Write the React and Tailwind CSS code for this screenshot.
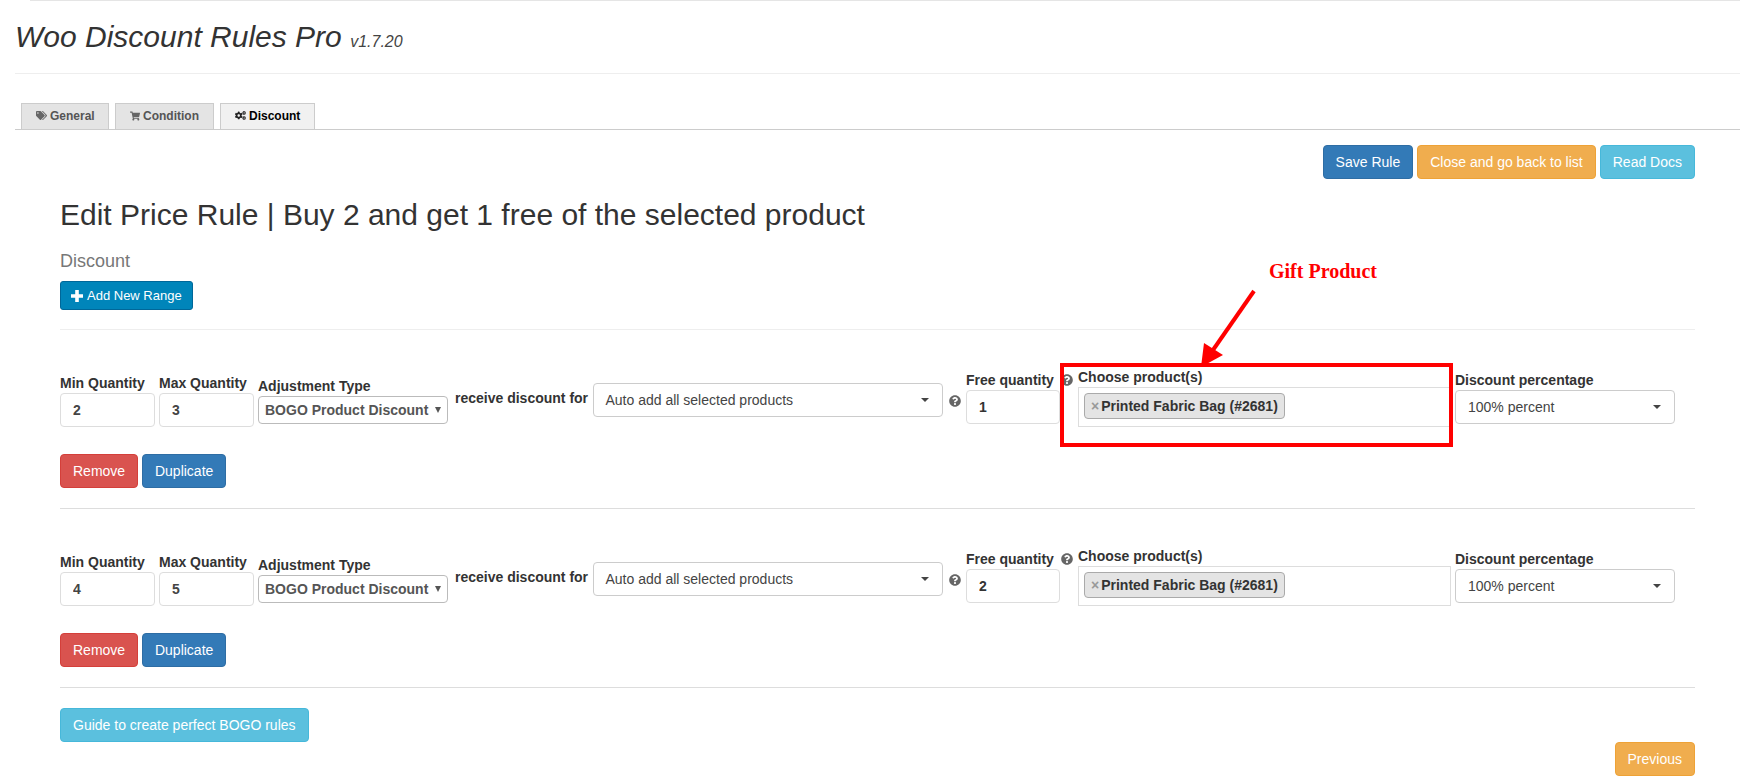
import React from 'react';
import { FaTags, FaShoppingCart, FaCogs, FaQuestionCircle } from 'react-icons/fa';

const btnBase = 'h-[34px] px-3 border rounded text-sm leading-5 text-white whitespace-nowrap';
const btnPrimary = 'bg-[#337ab7] border-[#2e6da4]';
const btnWarning = 'bg-[#f0ad4e] border-[#eea236]';
const btnInfo = 'bg-[#5bc0de] border-[#46b8da]';
const btnDanger = 'bg-[#d9534f] border-[#d43f3a]';

const labelClass = 'block h-5 text-sm leading-5 font-bold text-[#333] whitespace-nowrap';

// Small dark caret used by the select2 style dropdowns
const Caret = () => <span className="w-0 h-0 border-x-4 border-x-transparent border-t-4 border-t-[#444]" />;

const Tab = ({ icon, label, active, iconSize, width }) => (
  <div
    className={`${width} h-[26px] flex items-center gap-[3px] pl-[14px] pb-[2px] border-x border-t border-[#ccc] text-xs font-bold whitespace-nowrap ${
      active ? 'bg-[#f1f1f1] text-black' : 'bg-[#e4e4e4] text-[#555]'
    }`}
  >
    {React.createElement(icon, { size: iconSize, className: active ? 'text-[#222]' : 'text-[#666]' })}
    <span>{label}</span>
  </div>
);

const NumberField = ({ label, value, width }) => (
  <div className={`${width} shrink-0 mt-[43px]`}>
    <span className={labelClass}>{label}</span>
    <input
      readOnly
      value={value}
      className="w-full h-[34px] px-3 border border-[#ddd] rounded text-sm font-bold text-[#444] bg-white"
    />
  </div>
);

const SelectBox = ({ text, className, padding = 'pl-3' }) => (
  <div className={`h-[34px] flex items-center justify-between ${padding} pr-[13px] border border-[#ccc] rounded text-sm text-[#444] bg-white ${className}`}>
    <span>{text}</span>
    <Caret />
  </div>
);

const RuleRow = ({ min, max, free }) => (
  <div>
    <div className="h-[124px] flex items-start">
      <NumberField label="Min Quantity" value={min} width="w-[95px]" />
      <div className="ml-1">
        <NumberField label="Max Quantity" value={max} width="w-[95px]" />
      </div>
      <div className="ml-1 w-[190px] shrink-0 mt-[46px]">
        <span className={labelClass}>Adjustment Type</span>
        <div className="h-[28px] flex items-center justify-between pl-[6px] pr-[6px] border border-[#bbb] rounded text-sm font-bold text-[#555] bg-white">
          <span className="whitespace-nowrap">BOGO Product Discount</span>
          <span className="w-0 h-0 border-x-[3px] border-x-transparent border-t-[6px] border-t-[#555]" />
        </div>
      </div>
      <span className="ml-[7px] mt-[58px] w-[133px] shrink-0 text-sm leading-5 font-bold text-[#333] whitespace-nowrap">
        receive discount for
      </span>
      <SelectBox text="Auto add all selected products" padding="pl-[11.5px]" className="ml-[5px] mt-[53px] w-[350px] shrink-0" />
      <FaQuestionCircle size={12} className="ml-[6px] mt-[65px] shrink-0 text-[#666]" />
      <div className="ml-[5px] w-[94px] shrink-0 mt-[40px]">
        <div className="h-5 flex items-center gap-[7px]">
          <span className="text-sm leading-5 font-bold text-[#333] whitespace-nowrap">Free quantity</span>
          <FaQuestionCircle size={12} className="shrink-0 text-[#666]" />
        </div>
        <input
          readOnly
          value={free}
          className="w-full h-[34px] px-3 border border-[#ddd] rounded text-sm font-bold text-[#333] bg-white"
        />
      </div>
      <div className="ml-[18px] w-[373px] shrink-0 mt-[37px]">
        <span className={labelClass}>Choose product(s)</span>
        <div className="h-10 pl-[5px] pt-[5px] border border-[#ddd] bg-white">
          <div className="flex w-fit h-[26px] items-center pl-[6px] pr-[6px] gap-[2px] border border-[#aaa] rounded bg-[#e4e4e4] text-sm font-bold text-[#333]">
            <span className="text-[#999]">×</span>
            <span>Printed Fabric Bag (#2681)</span>
          </div>
        </div>
      </div>
      <div className="ml-1 w-[220px] shrink-0 mt-[40px]">
        <span className={labelClass}>Discount percentage</span>
        <SelectBox text="100% percent" />
      </div>
    </div>
    <div className="flex gap-1">
      <button className={`${btnBase} ${btnDanger}`}>Remove</button>
      <button className={`h-[34px] w-[84px] border rounded text-sm leading-5 text-white whitespace-nowrap ${btnPrimary}`}>Duplicate</button>
    </div>
    <div className="mt-5 h-px bg-[#ddd]" />
  </div>
);

export default function App() {
  return (
    <div className="relative h-[777px] overflow-hidden bg-white font-['Liberation_Sans',Arial,sans-serif] text-[#333]">
      <div className="ml-[30px] h-px bg-[#e5e5e5]" />

      <div className="ml-[15px] h-[73px] border-b border-[#eee] pt-[19px]">
        <h1 className="text-[30px] leading-[33px] italic font-normal text-[#333] whitespace-nowrap">
          Woo Discount Rules Pro <small className="text-[16px] text-[#444]">v1.7.20</small>
        </h1>
      </div>

      <div className="ml-[15px] mt-[29px] pl-[6px] flex gap-[6px] border-b border-[#ccc]">
        <Tab icon={FaTags} label="General" iconSize={11} width="w-[88px]" />
        <Tab icon={FaShoppingCart} label="Condition" iconSize={10} width="w-[99px]" />
        <Tab icon={FaCogs} label="Discount" iconSize={11} width="w-[95px]" active />
      </div>

      <main className="pl-[60px] pr-[45px] pt-[15px]">
        <div className="flex justify-end gap-1">
          <button className={`${btnBase} ${btnPrimary}`}>Save Rule</button>
          <button className={`${btnBase} ${btnWarning}`}>Close and go back to list</button>
          <button className={`${btnBase} ${btnInfo}`}>Read Docs</button>
        </div>

        <h2 className="mt-[19px] text-[30px] leading-[33px] font-normal text-[#333] whitespace-nowrap">
          Edit Price Rule | Buy 2 and get 1 free of the selected product
        </h2>
        <h4 className="mt-5 text-lg leading-5 font-normal text-[#777]">Discount</h4>
        <button className="mt-[10px] h-[29px] px-[10px] flex items-center gap-1 border border-[#006799] rounded-[3px] bg-[#0085ba] text-[13px] text-white">
          <svg width="12" height="12" viewBox="0 0 12 12" fill="currentColor">
            <path d="M4.2 0h3.6v4.2H12v3.6H7.8V12H4.2V7.8H0V4.2h4.2z" />
          </svg>
          Add New Range
        </button>

        <div className="mt-[19px] h-px bg-[#eee]" />

        <RuleRow min="2" max="3" free="1" />
        <RuleRow min="4" max="5" free="2" />

        <div className="mt-5">
          <button className={`${btnBase} ${btnInfo}`}>Guide to create perfect BOGO rules</button>
        </div>
        <div className="flex justify-end">
          <button className={`${btnBase} ${btnWarning}`}>Previous</button>
        </div>
      </main>

      {/* annotation drawn over the first row */}
      <div className="absolute left-[1060px] top-[363px] w-[393px] h-[84px] border-4 border-[#f00]" />
      <svg className="absolute left-[1190px] top-[285px]" width="70" height="90" viewBox="0 0 70 90">
        <line x1="64" y1="6" x2="23" y2="65" stroke="#f00" strokeWidth="4" />
        <polygon points="11,82 14,58 33,70" fill="#f00" />
      </svg>
      <span className="absolute left-[1269px] top-[259px] font-['Liberation_Serif',serif] text-xl leading-6 font-bold text-[#f00] whitespace-nowrap">
        Gift Product
      </span>
    </div>
  );
}
